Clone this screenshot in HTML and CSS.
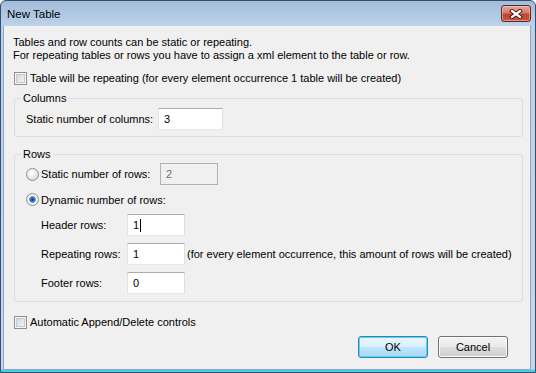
FILE: index.html
```html
<!DOCTYPE html>
<html>
<head>
<meta charset="utf-8">
<title>New Table</title>
<link rel="stylesheet" href="styles.css">
</head>
<body>
<div class="window">
  <div class="titlebar">
    <span class="title">New Table</span>
    <span class="close">
      <svg width="14" height="10" viewBox="0 0 14 10">
        <path d="M3 2 L11 8 M11 2 L3 8" stroke="#3b1611" stroke-width="4" stroke-linecap="square" fill="none"/>
        <path d="M3 2 L11 8 M11 2 L3 8" stroke="#ffffff" stroke-width="2.2" stroke-linecap="square" fill="none"/>
      </svg>
    </span>
  </div>
  <div class="client">
    <p class="intro">Tables and row counts can be static or repeating.<br>For repeating tables or rows you have to assign a xml element to the table or row.</p>
    <div class="check first"><span class="box"></span><span>Table will be repeating (for every element occurrence 1 table will be created)</span></div>

    <fieldset class="group cols">
      <legend>Columns</legend>
      <div class="frow"><span class="lbl lbl-cols">Static number of columns:</span><span class="input w65">3</span></div>
    </fieldset>

    <fieldset class="group rows">
      <legend>Rows</legend>
      <div class="frow"><span class="radio"></span><span class="lbl lbl-static">Static number of rows:</span><span class="input w58 disabled">2</span></div>
      <div class="frow radio-row"><span class="radio on"></span><span>Dynamic number of rows:</span></div>
      <div class="frow sub first-sub"><span class="lbl lbl-sub">Header rows:</span><span class="input w58">1<span class="caret"></span></span></div>
      <div class="frow sub"><span class="lbl lbl-sub">Repeating rows:</span><span class="input w58">1</span><span class="hint">(for every element occurrence, this amount of rows will be created)</span></div>
      <div class="frow sub"><span class="lbl lbl-sub">Footer rows:</span><span class="input w58">0</span></div>
    </fieldset>

    <div class="check auto"><span class="box"></span><span>Automatic Append/Delete controls</span></div>

    <div class="buttons">
      <span class="btn default">OK</span>
      <span class="btn">Cancel</span>
    </div>
  </div>
</div>
</body>
</html>
```

FILE: styles.css
```css
* { box-sizing: border-box; }
html, body { margin: 0; padding: 0; }
body {
  width: 536px;
  height: 373px;
  overflow: hidden;
  background: #ffffff;
  font-family: "Liberation Sans", Arial, sans-serif;
  font-size: 11px;
  color: #000;
}

.window {
  width: 536px;
  height: 373px;
  border: 1px solid #34506f;
  border-radius: 6px 6px 0 0;
  display: flex;
  flex-direction: column;
  background: linear-gradient(to bottom, #a3bcd9 0, #bcd1e9 24px, #c4d7ec calc(100% - 3px), #42cdf0 calc(100% - 2px), #42cdf0 100%);
}

.titlebar {
  height: 24px;
  display: flex;
  align-items: flex-start;
  padding-left: 6px;
  flex: none;
}
.title {
  margin-top: 2px;
  line-height: 23px;
  font-size: 11.5px;
  color: #000;
}
.close {
  margin: 4px 4px 0 auto;
  width: 30px;
  height: 17px;
  border: 1px solid #5c2a24;
  border-radius: 3px;
  background: linear-gradient(to bottom, #e2a89d 0, #d47a6c 45%, #c2432f 55%, #c8553f 100%);
  box-shadow: inset 0 0 0 1px rgba(255, 220, 210, 0.45);
  display: flex;
  align-items: center;
  justify-content: center;
}

.client {
  flex: 1;
  margin: 0 4px 2px 2px;
  border: 1px solid #8ea6c2;
  border-top-color: #c2d5ea;
  background: #f0f0f0;
  padding: 10px 7px 0 9px;
  display: flex;
  flex-direction: column;
}

.intro {
  margin: 0;
  line-height: 13px;
}

.check {
  display: flex;
  align-items: center;
  height: 13px;
  margin-left: 1px;
  line-height: 13px;
}
.check.first { margin-top: 10px; }
.check.auto { margin-top: 14px; }

.box {
  width: 13px;
  height: 13px;
  margin-right: 3px;
  border: 1px solid #8e8f8f;
  background: linear-gradient(135deg, #c9ccd1 0, #e6e7e9 55%, #f8f8f8 100%);
  box-shadow: inset 0 0 0 1px #f4f4f4, inset 0 0 0 2px #c6c9ce;
  flex: none;
}

.group {
  margin: 7px 0 0 1px;
  padding: 0;
  border: 1px solid #d5dfe5;
  border-radius: 3px;
  min-width: 0;
}
.group legend {
  margin-left: 6px;
  padding: 0 2px;
  line-height: 13px;
}
.cols { padding: 3px 0 6px 0; }
.rows { margin-top: 11px; padding: 2px 0 7px 0; }

.frow {
  display: flex;
  align-items: center;
  padding-left: 11px;
}
.lbl { flex: none; }
.lbl-cols { width: 132px; }
.lbl-static { width: 119px; }
.lbl-sub { width: 86px; }

.radio-row { margin-top: 8px; height: 13px; }
.sub { padding-left: 26px; margin-top: 7px; }
.sub.first-sub { margin-top: 8px; }

.radio {
  width: 13px;
  height: 13px;
  margin-right: 2px;
  border-radius: 50%;
  border: 1px solid #8e8f8f;
  background: radial-gradient(circle at 40% 35%, #ffffff 0, #ececec 45%, #cfcfcf 100%);
  flex: none;
}
.radio.on {
  background: radial-gradient(circle at 50% 50%, #123f7a 0, #2a64ab 1.6px, #5aa0dc 3px, #d8e8f4 3.6px, #f3f3f3 4.2px, #dcdcdc 100%);
}

.input {
  flex: none;
  height: 22px;
  border: 1px solid;
  border-color: #abadb3 #dbdfe6 #e3e9ef #e2e3ea;
  background: #ffffff;
  padding-left: 5px;
  line-height: 20px;
  display: flex;
  align-items: center;
}
.w65 { width: 65px; }
.w58 { width: 58px; }
.input.disabled {
  background: #f0f0f0;
  border-color: #adb2b5;
  color: #6d6d6d;
}
.caret {
  display: inline-block;
  width: 1px;
  height: 13px;
  background: #000;
  margin-left: 1px;
}
.hint { margin-left: 2px; }

.buttons {
  margin-top: 7px;
  display: flex;
  justify-content: flex-end;
  gap: 10px;
  padding-right: 15px;
}
.btn {
  width: 70px;
  height: 22px;
  border: 1px solid #707070;
  border-radius: 3px;
  background: linear-gradient(to bottom, #f2f2f2 0, #ebebeb 50%, #dddddd 51%, #cfcfcf 100%);
  box-shadow: inset 0 0 0 1px #fcfcfc;
  display: flex;
  align-items: center;
  justify-content: center;
  line-height: 13px;
}
.btn.default {
  border-color: #3c7fb1;
  background: linear-gradient(to bottom, #eaf6fd 0, #d9f0fc 50%, #bee6fd 51%, #a7d9f5 100%);
  box-shadow: inset 0 0 0 1px #48d8fb;
}
```
